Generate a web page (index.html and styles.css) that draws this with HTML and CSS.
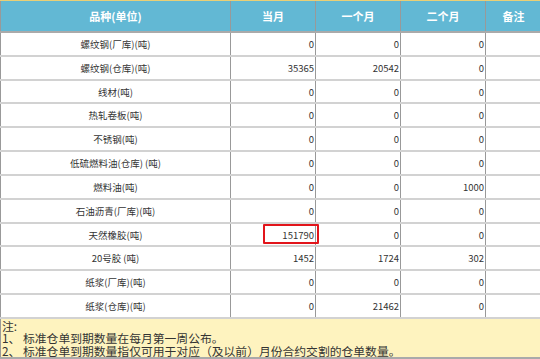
FILE: index.html
```html
<!DOCTYPE html>
<html>
<head>
<meta charset="utf-8">
<link rel="stylesheet" href="styles.css">
</head>
<body>
<div class="wrap">
<table class="grid">
<colgroup><col class="c1"><col class="c2"><col class="c3"><col class="c4"><col class="c5"></colgroup>
<thead>
<tr><th>品种(单位)</th><th>当月</th><th>一个月</th><th>二个月</th><th>备注</th></tr>
</thead>
<tbody>
<tr><td class="name">螺纹钢(厂库)(吨)</td><td class="num">0</td><td class="num">0</td><td class="num">0</td><td></td></tr>
<tr><td class="name">螺纹钢(仓库)(吨)</td><td class="num">35365</td><td class="num">20542</td><td class="num">0</td><td></td></tr>
<tr><td class="name">线材(吨)</td><td class="num">0</td><td class="num">0</td><td class="num">0</td><td></td></tr>
<tr><td class="name">热轧卷板(吨)</td><td class="num">0</td><td class="num">0</td><td class="num">0</td><td></td></tr>
<tr><td class="name">不锈钢(吨)</td><td class="num">0</td><td class="num">0</td><td class="num">0</td><td></td></tr>
<tr><td class="name">低硫燃料油(仓库) (吨)</td><td class="num">0</td><td class="num">0</td><td class="num">0</td><td></td></tr>
<tr><td class="name">燃料油(吨)</td><td class="num">0</td><td class="num">0</td><td class="num">1000</td><td></td></tr>
<tr><td class="name">石油沥青(厂库)(吨)</td><td class="num">0</td><td class="num">0</td><td class="num">0</td><td></td></tr>
<tr><td class="name">天然橡胶(吨)</td><td class="num">151790</td><td class="num">0</td><td class="num">0</td><td></td></tr>
<tr><td class="name">20号胶 (吨)</td><td class="num">1452</td><td class="num">1724</td><td class="num">302</td><td></td></tr>
<tr><td class="name">纸浆(厂库)(吨)</td><td class="num">0</td><td class="num">0</td><td class="num">0</td><td></td></tr>
<tr><td class="name">纸浆(仓库)(吨)</td><td class="num">0</td><td class="num">21462</td><td class="num">0</td><td></td></tr>
</tbody>
<tfoot>
<tr><td colspan="5" class="note"><div class="line">注:</div><div class="line">1、 标准仓单到期数量在每月第一周公布。</div><div class="line">2、 标准仓单到期数量指仅可用于对应（及以前）月份合约交割的仓单数量。</div></td></tr>
</tfoot>
</table>
<div class="mark"></div>
</div>
</body>
</html>
```

FILE: styles.css
```css
html, body {
  margin: 0;
  padding: 0;
  background: #fff;
  overflow: hidden;
}
.wrap {
  position: relative;
  width: 540px;
  height: 359px;
  overflow: hidden;
  border-top: 1px solid #e9cf76;
  box-sizing: border-box;
}
.grid {
  border-collapse: collapse;
  table-layout: fixed;
  width: 541px;
  font-family: "Noto Sans CJK SC", "Microsoft YaHei", sans-serif;
  color: #333;
}
.c1 { width: 230px; }
.c2 { width: 85px; }
.c3 { width: 85px; }
.c4 { width: 85px; }
.c5 { width: 56px; }
.grid th {
  background: #62b8d4;
  color: #fff;
  font-weight: bold;
  font-size: 11px;
  height: 30px;
  padding: 0;
  border-left: 1px solid #999;
  border-right: 1px solid #999;
  border-bottom: 2px solid #aaa;
}
.grid td {
  height: 21.83px;
  padding: 0 1px;
  font-size: 9.5px;
  border-left: 1px solid #999;
  border-right: 1px solid #999;
  border-bottom: 2px solid #d2d2d2;
  line-height: 12px;
}
.grid td.name { text-align: center; }
.grid td.num { text-align: right; }
.grid td.note {
  background: #fef3bf;
  font-size: 11.8px;
  height: auto;
  padding: 1px 0 0 1px;
  text-align: left;
  border-bottom: 2px solid #aaa;
  vertical-align: top;
}
.note .line {
  height: 12.5px;
  line-height: 12.5px;
  white-space: nowrap;
  overflow: visible;
}
.mark {
  position: absolute;
  left: 263px;
  top: 223px;
  width: 56px;
  height: 20px;
  border: 2px solid #e2151b;
  border-radius: 1px;
  box-sizing: border-box;
}
```
